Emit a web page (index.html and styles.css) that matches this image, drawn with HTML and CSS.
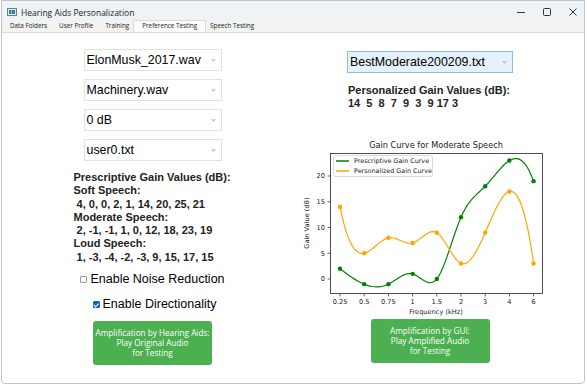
FILE: index.html
```html
<!DOCTYPE html>
<html lang="en">
<head>
  <meta charset="UTF-8" />
  <title>Hearing Aids Personalization</title>
  <link rel="stylesheet" href="styles.css">
</head>
<body>
  <div class="window">
    <div class="titlebar">
      <svg class="app-icon" width="10" height="8" viewBox="0 0 10 8">
        <rect x="0.5" y="0.5" width="9" height="7" fill="#dfe6ee" stroke="#6f7f8f"/>
        <rect x="2" y="2" width="2.5" height="4" fill="#2f9a4a"/>
        <rect x="5" y="2" width="3" height="4" fill="#3b78c4"/>
      </svg>
      <span class="title">Hearing Aids Personalization</span>
      <div class="controls">
        <svg width="10" height="10" viewBox="0 0 10 10"><path d="M1 5.5h8" stroke="#333" stroke-width="1"/></svg>
        <svg width="10" height="10" viewBox="0 0 10 10"><rect x="1.5" y="1.5" width="7" height="7" rx="1" fill="none" stroke="#333"/></svg>
        <svg width="10" height="10" viewBox="0 0 10 10"><path d="M1.5 1.5l7 7M8.5 1.5l-7 7" stroke="#333" stroke-width="1"/></svg>
      </div>
    </div>

    <div class="tabs">
      <div class="tab">Data Folders</div>
      <div class="tab">User Profile</div>
      <div class="tab">Training</div>
      <div class="tab active">Preference Testing</div>
      <div class="tab">Speech Testing</div>
    </div>

    <div class="content">
      <div class="col left">
        <div class="combo">ElonMusk_2017.wav<span class="chev"></span></div>
        <div class="combo">Machinery.wav<span class="chev"></span></div>
        <div class="combo">0 dB<span class="chev"></span></div>
        <div class="combo">user0.txt<span class="chev"></span></div>

        <div class="gains">
          <div class="head">Prescriptive Gain Values (dB):</div>
          <div class="head">Soft Speech:</div>
          <div class="vals"> 4, 0, 0, 2, 1, 14, 20, 25, 21</div>
          <div class="head">Moderate Speech:</div>
          <div class="vals"> 2, -1, -1, 1, 0, 12, 18, 23, 19</div>
          <div class="head">Loud Speech:</div>
          <div class="vals"> 1, -3, -4, -2, -3, 9, 15, 17, 15</div>
        </div>

        <label class="check noise"><span class="box"></span>Enable Noise Reduction</label>
        <label class="check direct"><span class="box checked"></span>Enable Directionality</label>

        <button class="play">Amplification by Hearing Aids:<br>Play Original Audio<br>for Testing</button>
      </div>

      <div class="col right">
        <div class="combo focused">BestModerate200209.txt<span class="chev"></span></div>

        <div class="personal">
          <div class="head">Personalized Gain Values (dB):</div>
          <div class="vals">14  5  8  7  9  3  9 17 3</div>
        </div>

        <svg class="chart" width="250" height="180" viewBox="0 0 250 180">
          <text class="ctitle" x="135" y="12" text-anchor="middle">Gain Curve for Moderate Speech</text>
          <g id="curves"></g>
          <rect x="29.5" y="17.5" width="212" height="140" fill="none" stroke="#222" stroke-width="0.8"/>
          <g id="ticks" class="tick"></g>
          <text class="lbl" x="135" y="178" text-anchor="middle">Frequency (kHz)</text>
          <text class="lbl" x="0" y="0" text-anchor="middle" transform="translate(8 87) rotate(-90)">Gain Value (dB)</text>
          <g class="legend">
            <rect x="32.5" y="19.5" width="99" height="21" rx="2" fill="#fff" fill-opacity="0.85" stroke="#ccc" stroke-width="0.7"/>
            <path d="M35 25h13" stroke="#008000" stroke-width="1.3"/>
            <path d="M35 35h13" stroke="#ffa500" stroke-width="1.3"/>
            <text x="53" y="27.3">Prescriptive Gain Curve</text>
            <text x="53" y="37.3">Personalized Gain Curve</text>
          </g>
        </svg>

        <button class="play">Amplification by GUI:<br>Play Amplified Audio<br>for Testing</button>
      </div>
    </div>
  </div>

  <script src="chart.js"></script>
</body>
</html>
```

FILE: styles.css
```css
* {
  margin: 0;
  padding: 0;
  box-sizing: border-box;
}

body {
  background: #fff;
  font-family: "Liberation Sans", Arial, sans-serif;
  color: #111;
}

.window {
  width: 584px;
  height: 384px;
  margin-left: 1px;
  border: 1px solid #c4c4c4;
  border-radius: 0 0 4px 4px;
  overflow: hidden;
}

.titlebar {
  height: 20px;
  background: #eef3f8;
  display: flex;
  align-items: center;
  padding: 2px 0 0 5px;
  font-family: "Open Sans", "Noto Sans", sans-serif;
}

.app-icon {
  margin-right: 4px;
}

.title {
  font-size: 8.5px;
  color: #222;
}

.controls {
  margin-left: auto;
  display: flex;
  gap: 16px;
  padding-right: 6px;
}

.tabs {
  height: 12px;
  background: #f3f3f3;
  border-bottom: 1px solid #dadada;
  display: flex;
  align-items: flex-end;
  padding-left: 2px;
  font-family: "Open Sans", "Noto Sans", sans-serif;
  font-size: 6.3px;
  color: #222;
}

.tab {
  height: 11px;
  line-height: 10px;
  padding: 0 6px;
}

.tab.active {
  height: 12px;
  margin: 0 -2px 0 -2px;
  padding: 0 8px;
  background: #fbfbfb;
  border: 1px solid #dadada;
  border-bottom: none;
}

.content {
  display: flex;
}

.col {
  display: flex;
  flex-direction: column;
  align-items: center;
}

.left {
  width: 301px;
  padding-top: 16px;
}

.right {
  width: 254px;
  padding-top: 18px;
}

.combo {
  position: relative;
  width: 138px;
  height: 22px;
  line-height: 21px;
  padding-left: 2px;
  margin-bottom: 8px;
  border: 1px solid #e2e2e2;
  background: #fff;
  font-size: 12.4px;
  color: #000;
}

.combo.focused {
  width: 166px;
  margin-bottom: 2px;
  background: #e5f1fb;
  border-color: #8fbbe6;
}

.chev {
  position: absolute;
  right: 6px;
  top: 8px;
  width: 3px;
  height: 3px;
  border-right: 1px solid #b4b4b4;
  border-bottom: 1px solid #b4b4b4;
  transform: rotate(45deg);
}

.gains {
  width: 168px;
  margin: 2px 0 0 10px;
  font-weight: bold;
  font-size: 11px;
  line-height: 13.3px;
  color: #222;
}

.vals {
  white-space: pre;
}

.check {
  display: flex;
  align-items: center;
  font-size: 12.5px;
  color: #000;
}

.noise {
  margin-top: 8px;
}

.direct {
  margin-top: 11px;
  margin-left: 4px;
}

.box {
  width: 7px;
  height: 7px;
  margin-right: 3px;
  border: 1px solid #9a9a9a;
  border-radius: 1px;
  background: #fff;
}

.box.checked {
  border-color: #1662b8;
  background: #1662b8;
  position: relative;
}

.box.checked::after {
  content: "";
  position: absolute;
  left: 1.5px;
  top: 0;
  width: 1.5px;
  height: 3.5px;
  border-right: 1px solid #fff;
  border-bottom: 1px solid #fff;
  transform: rotate(45deg);
}

.play {
  width: 119px;
  height: 44px;
  margin-top: 10px;
  border: none;
  border-radius: 3px;
  background: #4caf50;
  color: #fff;
  font-family: "Open Sans", "Noto Sans", sans-serif;
  font-size: 8.2px;
  line-height: 10px;
}

.right .play {
  margin-top: 3px;
}

.personal {
  width: 164px;
  margin-top: 9px;
  font-weight: bold;
  font-size: 11px;
  line-height: 12.5px;
  color: #222;
}

.chart {
  display: block;
  margin-top: 27px;
  margin-left: -8px;
  font-family: "DejaVu Sans", sans-serif;
}

.chart .ctitle {
  font-size: 8.2px;
  fill: #222;
}

.chart .lbl {
  font-size: 6.6px;
  fill: #222;
}

.tick text {
  font-size: 6.6px;
  fill: #222;
}

.legend text {
  font-size: 6.4px;
  fill: #222;
}
```

FILE: chart.js
```js
const greenVals = [2, -1, -1, 1, 0, 12, 18, 23, 19];
const orangeVals = [14, 5, 8, 7, 9, 3, 9, 17, 3];
const freqs = ["0.25", "0.5", "0.75", "1", "1.5", "2", "3", "4", "6"];

const x0 = 39, dx = 24.2, y0 = 143, dy = 5.15;
const px = i => x0 + i * dx;
const py = v => y0 - v * dy;
const NS = "http://www.w3.org/2000/svg";

// not-a-knot cubic spline, uniform spacing
function secondDerivs(y) {
  const n = y.length;
  const A = [], b = [];
  for (let i = 0; i < n; i++) { A.push(new Array(n).fill(0)); b.push(0); }
  A[0][0] = 1; A[0][1] = -2; A[0][2] = 1;
  A[n - 1][n - 3] = 1; A[n - 1][n - 2] = -2; A[n - 1][n - 1] = 1;
  for (let i = 1; i < n - 1; i++) {
    A[i][i - 1] = 1; A[i][i] = 4; A[i][i + 1] = 1;
    b[i] = 6 * (y[i - 1] - 2 * y[i] + y[i + 1]);
  }
  for (let c = 0; c < n; c++) {
    let p = c;
    for (let r = c + 1; r < n; r++) if (Math.abs(A[r][c]) > Math.abs(A[p][c])) p = r;
    [A[c], A[p]] = [A[p], A[c]];
    [b[c], b[p]] = [b[p], b[c]];
    for (let r = c + 1; r < n; r++) {
      const f = A[r][c] / A[c][c];
      for (let k = c; k < n; k++) A[r][k] -= f * A[c][k];
      b[r] -= f * b[c];
    }
  }
  const m = new Array(n).fill(0);
  for (let r = n - 1; r >= 0; r--) {
    let s = b[r];
    for (let k = r + 1; k < n; k++) s -= A[r][k] * m[k];
    m[r] = s / A[r][r];
  }
  return m;
}

function curve(vals, color) {
  const m = secondDerivs(vals);
  const pts = [];
  for (let i = 0; i < vals.length - 1; i++) {
    for (let s = 0; s < 12; s++) {
      const t = s / 12, u = 1 - t;
      const v = u * vals[i] + t * vals[i + 1] + (u * u * u - u) * m[i] / 6 + (t * t * t - t) * m[i + 1] / 6;
      pts.push(px(i + t).toFixed(2) + " " + py(v).toFixed(2));
    }
  }
  pts.push(px(vals.length - 1).toFixed(2) + " " + py(vals[vals.length - 1]).toFixed(2));

  const g = document.getElementById("curves");
  const path = document.createElementNS(NS, "path");
  path.setAttribute("d", "M" + pts.join("L"));
  path.setAttribute("fill", "none");
  path.setAttribute("stroke", color);
  path.setAttribute("stroke-width", "1.2");
  g.appendChild(path);

  vals.forEach((v, i) => {
    const c = document.createElementNS(NS, "circle");
    c.setAttribute("cx", px(i));
    c.setAttribute("cy", py(v));
    c.setAttribute("r", "2.2");
    c.setAttribute("fill", color);
    g.appendChild(c);
  });
}

curve(greenVals, "#008000");
curve(orangeVals, "#ffa500");

const ticks = document.getElementById("ticks");
freqs.forEach((f, i) => {
  ticks.insertAdjacentHTML("beforeend",
    `<path d="M${px(i)} 157.5v3" stroke="#222" stroke-width="0.7"/>` +
    `<text x="${px(i)}" y="168" text-anchor="middle">${f}</text>`);
});
[0, 5, 10, 15, 20].forEach(v => {
  ticks.insertAdjacentHTML("beforeend",
    `<path d="M29.5 ${py(v)}h-3" stroke="#222" stroke-width="0.7"/>` +
    `<text x="24" y="${py(v) + 2.3}" text-anchor="end">${v}</text>`);
});
```
